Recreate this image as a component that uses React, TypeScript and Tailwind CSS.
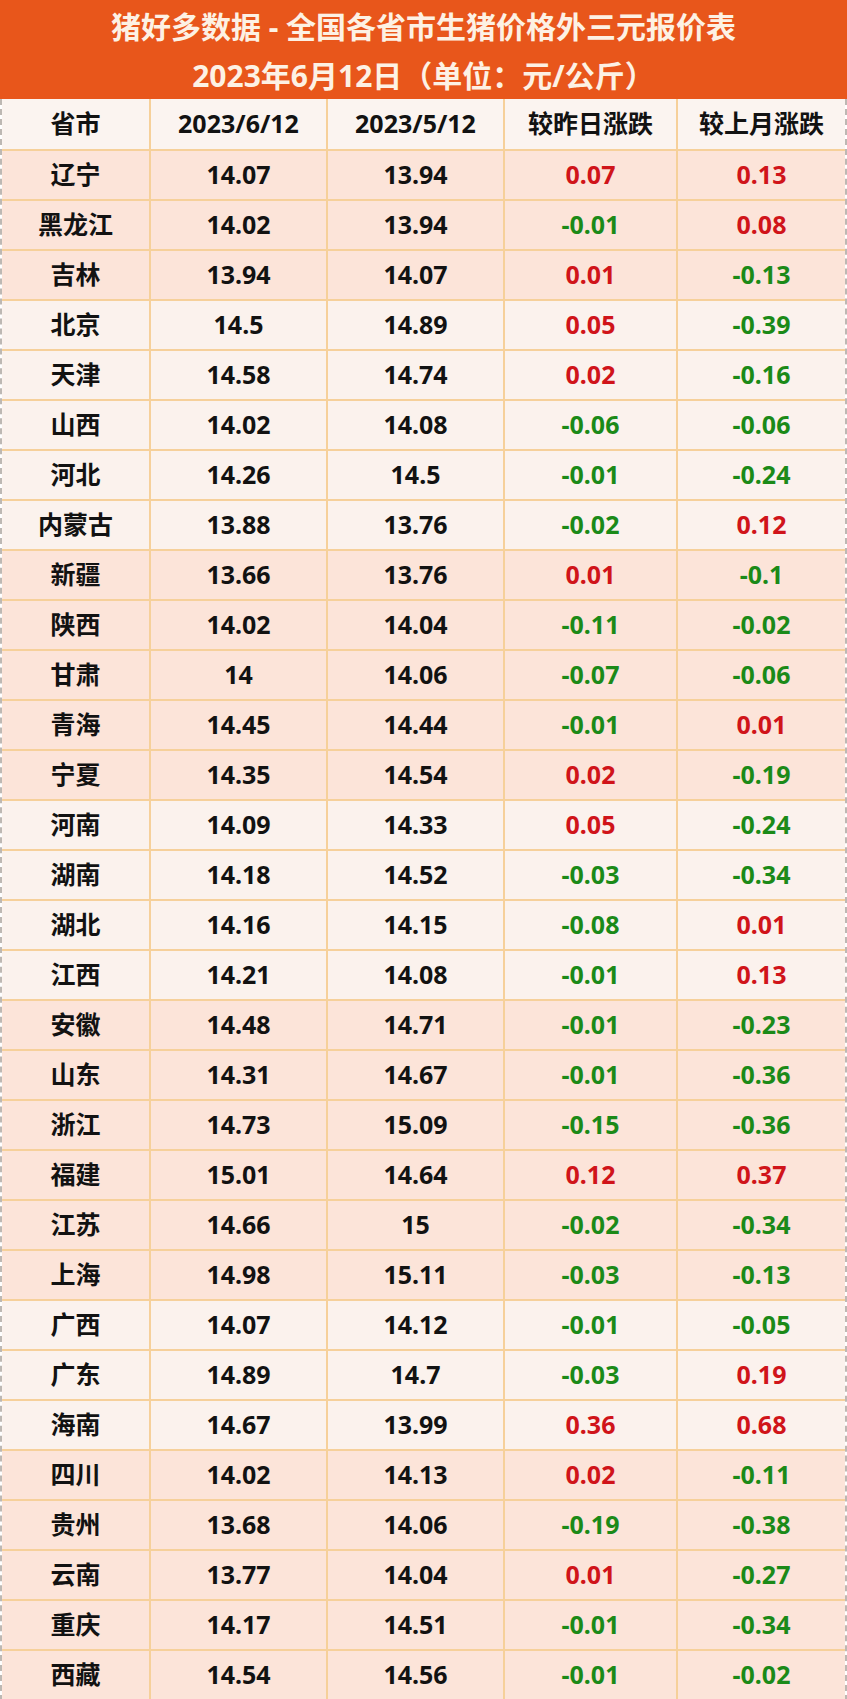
import React from "react";

type Row = [string, string, string, string, string, "L" | "P"];

const rows: Row[] = [
  ["辽宁", "14.07", "13.94", "0.07", "0.13", "P"],
  ["黑龙江", "14.02", "13.94", "-0.01", "0.08", "P"],
  ["吉林", "13.94", "14.07", "0.01", "-0.13", "P"],
  ["北京", "14.5", "14.89", "0.05", "-0.39", "L"],
  ["天津", "14.58", "14.74", "0.02", "-0.16", "L"],
  ["山西", "14.02", "14.08", "-0.06", "-0.06", "L"],
  ["河北", "14.26", "14.5", "-0.01", "-0.24", "L"],
  ["内蒙古", "13.88", "13.76", "-0.02", "0.12", "L"],
  ["新疆", "13.66", "13.76", "0.01", "-0.1", "P"],
  ["陕西", "14.02", "14.04", "-0.11", "-0.02", "P"],
  ["甘肃", "14", "14.06", "-0.07", "-0.06", "P"],
  ["青海", "14.45", "14.44", "-0.01", "0.01", "P"],
  ["宁夏", "14.35", "14.54", "0.02", "-0.19", "P"],
  ["河南", "14.09", "14.33", "0.05", "-0.24", "L"],
  ["湖南", "14.18", "14.52", "-0.03", "-0.34", "L"],
  ["湖北", "14.16", "14.15", "-0.08", "0.01", "L"],
  ["江西", "14.21", "14.08", "-0.01", "0.13", "L"],
  ["安徽", "14.48", "14.71", "-0.01", "-0.23", "P"],
  ["山东", "14.31", "14.67", "-0.01", "-0.36", "P"],
  ["浙江", "14.73", "15.09", "-0.15", "-0.36", "P"],
  ["福建", "15.01", "14.64", "0.12", "0.37", "P"],
  ["江苏", "14.66", "15", "-0.02", "-0.34", "P"],
  ["上海", "14.98", "15.11", "-0.03", "-0.13", "P"],
  ["广西", "14.07", "14.12", "-0.01", "-0.05", "L"],
  ["广东", "14.89", "14.7", "-0.03", "0.19", "L"],
  ["海南", "14.67", "13.99", "0.36", "0.68", "L"],
  ["四川", "14.02", "14.13", "0.02", "-0.11", "P"],
  ["贵州", "13.68", "14.06", "-0.19", "-0.38", "P"],
  ["云南", "13.77", "14.04", "0.01", "-0.27", "P"],
  ["重庆", "14.17", "14.51", "-0.01", "-0.34", "P"],
  ["西藏", "14.54", "14.56", "-0.01", "-0.02", "P"],
];

const grid = "grid grid-cols-[147px_177px_177px_173px_1fr] h-[50px]";
const cell = "flex items-center justify-center border-l-2 border-[#f6d09a] first:border-l-0";

function Change({ v }: { v: string }) {
  const up = !v.startsWith("-");
  return <div className={`${cell} ${up ? "text-[#d0141a]" : "text-[#1b8a18]"}`}>{v}</div>;
}

export default function App() {
  return (
    <div className="w-[847px] font-['Noto_Sans','Noto_Sans_CJK_SC',sans-serif] font-bold text-[#121212]">
      {/* Title band */}
      <div className="h-[99px] bg-[#e8561b] text-[#fdf1e4] text-[30px] flex flex-col items-center">
        <div className="h-[52px] flex items-center">猪好多数据 - 全国各省市生猪价格外三元报价表</div>
        <div className="h-[46px] flex items-center">2023年6月12日（单位：元/公斤）</div>
      </div>

      <div className="border-x-2 border-b-2 border-dashed border-[#bdb8b3] text-[25px]">
        <div className={`${grid} bg-[#fbf4f0]`}>
          <div className={cell}>省市</div>
          <div className={cell}>2023/6/12</div>
          <div className={cell}>2023/5/12</div>
          <div className={cell}>较昨日涨跌</div>
          <div className={cell}>较上月涨跌</div>
        </div>
        {rows.map(([name, a, b, d, m, tone]) => (
          <div
            key={name}
            className={`${grid} border-t-2 border-[#f6d09a] ${tone === "P" ? "bg-[#fce4d9]" : "bg-[#fbf2ed]"}`}
          >
            <div className={cell}>{name}</div>
            <div className={cell}>{a}</div>
            <div className={cell}>{b}</div>
            <Change v={d} />
            <Change v={m} />
          </div>
        ))}
      </div>
    </div>
  );
}
